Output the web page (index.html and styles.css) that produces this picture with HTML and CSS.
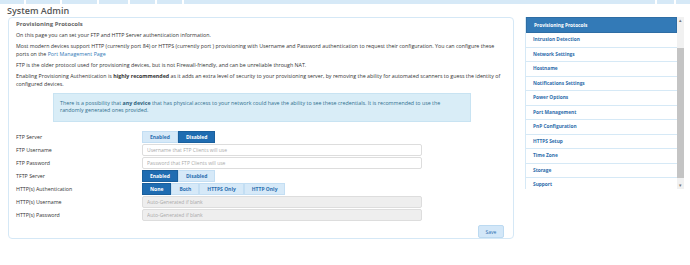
FILE: index.html
```html
<!DOCTYPE html>
<html lang="en">
<head>
    <meta charset="UTF-8">
    <title>System Admin</title>
    <link rel="stylesheet" href="styles.css">
</head>
<body>
    <div class="topbar">
        <span class="tab" style="width: 24px"></span>
        <span class="tab" style="width: 34px"></span>
        <span class="tab" style="width: 35px"></span>
        <span class="tab" style="width: 29px"></span>
        <span class="tab" style="width: 25px"></span>
        <span class="tab" style="width: 25px"></span>
        <span class="tab fill"></span>
        <span class="tab" style="width: 17px"></span>
        <span class="tab" style="width: 14px"></span>
    </div>

    <div class="page-title">System Admin</div>

    <div class="layout">
        <div class="panel">
            <div class="panel-title">Provisioning Protocols</div>
            <p>On this page you can set your FTP and HTTP Server authentication information.</p>
            <p>Most modern devices support HTTP (currently port 84) or HTTPS (currently port ) provisioning with Username and Password authentication to request their configuration. You can configure these ports on the <a href="#">Port Management Page</a></p>
            <p>FTP is the older protocol used for provisioning devices, but is not Firewall-friendly, and can be unreliable through NAT.</p>
            <p>Enabling Provisioning Authentication is <b>highly recommended</b> as it adds an extra level of security to your provisioning server, by removing the ability for automated scanners to guess the identity of configured devices.</p>

            <div class="alert">There is a possibility that <b>any device</b> that has physical access to your network could have the ability to see these credentials. It is recommended to use the randomly generated ones provided.</div>

            <div class="form">
                <div class="row">
                    <label>FTP Server</label>
                    <div class="btn-group">
                        <button class="seg">Enabled</button>
                        <button class="seg active">Disabled</button>
                    </div>
                </div>
                <div class="row">
                    <label>FTP Username</label>
                    <input class="field" type="text" placeholder="Username that FTP Clients will use">
                </div>
                <div class="row">
                    <label>FTP Password</label>
                    <input class="field" type="text" placeholder="Password that FTP Clients will use">
                </div>
                <div class="row">
                    <label>TFTP Server</label>
                    <div class="btn-group">
                        <button class="seg active">Enabled</button>
                        <button class="seg">Disabled</button>
                    </div>
                </div>
                <div class="row">
                    <label>HTTP(s) Authentication</label>
                    <div class="btn-group">
                        <button class="seg active">None</button>
                        <button class="seg">Both</button>
                        <button class="seg">HTTPS Only</button>
                        <button class="seg">HTTP Only</button>
                    </div>
                </div>
                <div class="row">
                    <label>HTTP(s) Username</label>
                    <input class="field" type="text" placeholder="Auto-Generated if blank" disabled>
                </div>
                <div class="row">
                    <label>HTTP(s) Password</label>
                    <input class="field" type="text" placeholder="Auto-Generated if blank" disabled>
                </div>
            </div>

            <div class="actions">
                <button class="save">Save</button>
            </div>
        </div>

        <div class="sidebar">
            <ul class="menu">
                <li class="current">Provisioning Protocols</li>
                <li>Intrusion Detection</li>
                <li>Network Settings</li>
                <li>Hostname</li>
                <li>Notifications Settings</li>
                <li>Power Options</li>
                <li>Port Management</li>
                <li>PnP Configuration</li>
                <li>HTTPS Setup</li>
                <li>Time Zone</li>
                <li>Storage</li>
                <li>Support</li>
            </ul>
            <div class="scrollbar">
                <span class="arrow">&#9652;</span>
                <span class="gap"></span>
                <span class="thumb"></span>
                <span class="arrow">&#9662;</span>
            </div>
        </div>
    </div>
</body>
</html>
```

FILE: styles.css
```css
body {
    margin: 0;
    background-color: #fff;
    font-family: 'Open Sans', sans-serif;
    color: #333;
    font-size: 5.3px;
}
.topbar {
    display: flex;
    gap: 2px;
    height: 4px;
}
.tab {
    background-color: #d6e9f7;
}
.tab.fill {
    flex: 1;
}
.page-title {
    font-size: 9px;
    font-weight: 600;
    color: #555;
    padding-left: 7px;
    height: 13px;
    line-height: 13px;
}
.layout {
    display: flex;
    gap: 11px;
    padding-left: 8px;
    align-items: flex-start;
}
.panel {
    width: 506px;
    box-sizing: border-box;
    border: 1px solid #d5e8f6;
    border-radius: 4px;
    padding: 1px 6px 0 7px;
}
.panel-title {
    font-size: 6px;
    font-weight: 700;
    color: #666;
    height: 11px;
    line-height: 11px;
    margin-bottom: 1px;
}
.panel p {
    margin: 0 0 3px;
    line-height: 8px;
}
.panel a {
    color: #337ab7;
    text-decoration: none;
}
.alert {
    margin: 5px 36px 8px 37px;
    background-color: #d9edf7;
    border: 1px solid #c8e3f2;
    color: #31708f;
    padding: 6px 10px 6px 6px;
    line-height: 7px;
    height: 15px;
}
.alert b {
    color: #2a5f7c;
}
.row {
    display: flex;
    align-items: center;
    height: 13px;
}
.row label {
    width: 126px;
    flex-shrink: 0;
    color: #333;
}
.btn-group {
    display: flex;
    height: 12px;
}
.seg {
    font-family: 'Open Sans', sans-serif;
    font-size: 5px;
    font-weight: 700;
    border: 1px solid #c3def3;
    background-color: #d6e9f8;
    color: #2c6fb0;
    padding: 0 7px;
    margin: 0;
    height: 12px;
    line-height: 10px;
}
.seg.active {
    background-color: #1f6cb1;
    border-color: #1a5f9c;
    color: #fff;
}
.field {
    width: 280px;
    height: 12px;
    box-sizing: border-box;
    border: 1px solid #ddd;
    border-radius: 2px;
    padding: 0 4px;
    font-family: 'Open Sans', sans-serif;
    font-size: 5px;
    background-color: #fff;
}
.field::placeholder {
    color: #aaa;
}
.field:disabled {
    background-color: #eee;
}
.actions {
    display: flex;
    justify-content: flex-end;
    margin-top: 4px;
    padding-right: 3px;
}
.save {
    font-family: 'Open Sans', sans-serif;
    font-size: 5px;
    width: 26px;
    height: 13px;
    background-color: #d3e7f8;
    border: 1px solid #bcdaf1;
    border-radius: 2px;
    color: #2c6fb0;
    padding: 0;
}
.sidebar {
    display: flex;
    width: 162px;
    height: 172px;
}
.menu {
    list-style: none;
    margin: 0;
    padding: 0;
    flex: 1;
    overflow: hidden;
    border-left: 1px solid #d6e9f6;
}
.menu li {
    height: 14.5px;
    box-sizing: border-box;
    line-height: 13.5px;
    padding-left: 7px;
    font-size: 4.8px;
    font-weight: 700;
    color: #2f6dab;
    border-bottom: 1px solid #d6e9f6;
}
.menu li.current {
    height: 16px;
    line-height: 14px;
    background-color: #337ab7;
    border: 1px solid #2e6da4;
    color: #fff;
}
.scrollbar {
    width: 7px;
    display: flex;
    flex-direction: column;
    background-color: #f1f1f1;
    margin-right: 3px;
}
.scrollbar .arrow {
    height: 7px;
    font-size: 5px;
    line-height: 7px;
    text-align: center;
    color: #777;
}
.scrollbar .gap {
    height: 24px;
}
.scrollbar .thumb {
    flex: 1;
    background-color: #c4c4c4;
    margin-bottom: 4px;
}
```
